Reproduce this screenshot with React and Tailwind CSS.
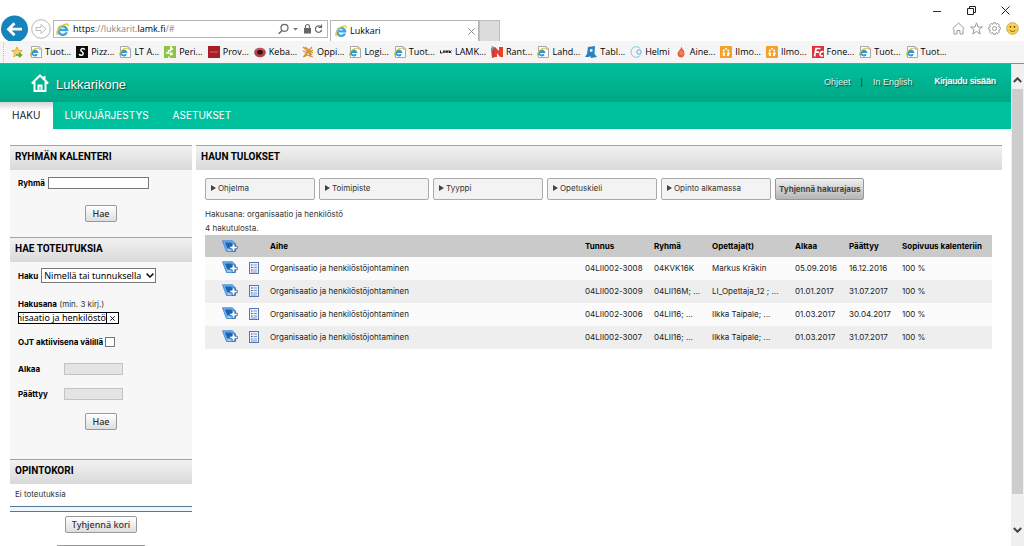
import React from "react";

const chromeFont = "font-['Open_Sans','Noto_Sans',sans-serif]";
const grad = "bg-linear-to-b from-[#f2f2f2] to-[#d9d9d9]";

function IeGlyph({ className }) {
  return (
    <svg viewBox="0 0 16 16" className={className} fill="none" aria-hidden="true">
      <path d="M13.2 11.4A5.3 5.3 0 1 1 13.6 8.6H4.6" stroke="#3fa6dd" strokeWidth="3" />
      <path d="M2.2 14.8C-.6 12.800 2.600 6.400 8 3C12 .6 15.800 .2 14.800 4" stroke="#ecc62a" strokeWidth="1.800" />
    </svg>
  );
}

function IePage() {
  return (
    <svg viewBox="0 0 12 12" className="size-3 shrink-0" fill="none" aria-hidden="true">
      <path d="M1.500 .5H9L11.500 3V11.500H1.500Z" fill="#fff" stroke="#a8a8a0" />
      <path d="M9 .5V3H11.500" stroke="#a8a8a0" />
      <path d="M7 8.300A2.600 2.600 0 1 1 7.300 6.200H2.600" stroke="#2f97d4" strokeWidth="1.800" />
      <path d="M.6 9.500C.2 7.500 2 4.500 4.500 3C6 2 7.500 2 7.600 3" stroke="#e6c52c" strokeWidth="1.100" />
    </svg>
  );
}

function FavIcon({ kind }) {
  if (kind === "ie") return <IePage />;
  return (
    <svg viewBox="0 0 12 12" className="size-3 shrink-0" fill="none" aria-hidden="true">
      {kind === "pizza" && (
        <>
          <rect width="12" height="12" fill="#0c0c0c" />
          <path d="M8.800 3.600C8 2 5 2.200 4.800 4C4.700 5.800 7.600 5.800 7.200 7.800C6.900 9.800 3.800 9.800 3.200 8" stroke="#fff" strokeWidth="1.500" />
        </>
      )}
      {kind === "peri" && (
        <>
          <rect width="12" height="12" fill="#8cc63f" />
          <path d="M7 0V3M7 4.500H4.500V7H2M7 6V9.500M5.500 8H9M5 12V10.500" stroke="#fff" strokeWidth="1.500" />
          <circle cx="7.500" cy="3" r="1.400" fill="#fff" />
        </>
      )}
      {kind === "prov" && (
        <>
          <rect width="12" height="12" fill="#a81e26" />
          <path d="M2 6H10" stroke="#d2666c" strokeWidth="1" />
        </>
      )}
      {kind === "keba" && (
        <>
          <ellipse cx="6" cy="6.500" rx="5.800" ry="4.800" fill="#b5404a" />
          <ellipse cx="6" cy="6.200" rx="2.800" ry="2.400" fill="#3c1014" />
          <path d="M2 4.500C4 2.500 8 2.500 10 4.500" stroke="#d77a80" strokeWidth=".8" />
        </>
      )}
      {kind === "oppi" && (
        <path d="M1 1L10 9M3 1L11 7M10 1L2 10M6 4L3 11M6 5L9 11M1 5L6 7L11 4M1 11L5 9L11 11" stroke="#d79436" strokeWidth="1.300" />
      )}
      {kind === "lamk" && (
        <path d="M.5 4.500V7H2.500M3 7L4 4.500L5 7M6 7V4.500L7 6.500L8 4.500V7M9.500 4.500V7M11.500 4.500L10 6L11.500 7" stroke="#222" strokeWidth="1" />
      )}
      {kind === "rant" && (
        <>
          <path d="M0 2L4 1V11L1 12Z" fill="#b9453c" />
          <path d="M4 1L8 5V1H12V11H9L6 7V11H3Z" fill="#e4402e" />
          <path d="M1.500 0V4" stroke="#69a7c4" strokeWidth="1.500" />
        </>
      )}
      {kind === "tabl" && <path d="M3 1L10 0L9.500 8L12 11L6 12L5 10L4 11L0 11L2 8Z M5 3V6L7.500 5.500V3Z" fill="#2b7fc3" fillRule="evenodd" />}
      {kind === "helmi" && (
        <>
          <path d="M10.300 2.600A5.300 5.300 0 1 0 10.600 9" stroke="#7fc4e6" strokeWidth="1" />
          <circle cx="9" cy="6" r="2.200" stroke="#5aaedb" strokeWidth="1" />
        </>
      )}
      {kind === "aine" && (
        <>
          <path d="M6.500 .5C7 3 9.800 4.500 9.500 8C9.300 10.500 7.500 11.500 6 11.500C4 11.500 2.500 10 2.500 7.800C2.600 5.500 5.500 4 6.500 .5Z" fill="#e8613e" />
          <path d="M4.500 7L7.500 9M5 5.500L8.500 7.500" stroke="#f6b09a" strokeWidth=".8" />
        </>
      )}
      {kind === "ilmo" && (
        <>
          <rect width="12" height="12" rx="1" fill="#f6a02c" />
          <path d="M3.500 10V6.500L2.500 8M3.500 6.500L5 8M8.500 10V6.500L7 8M8.500 6.500L9.800 8M4.500 10V8.500M7.500 10V8.500" stroke="#fff" strokeWidth="1.100" />
          <circle cx="3.800" cy="4.500" r="1" fill="#fff" />
          <circle cx="8.200" cy="4.500" r="1" fill="#fff" />
          <circle cx="6" cy="2.800" r="1" fill="#fff" />
        </>
      )}
      {kind === "fone" && (
        <>
          <rect width="12" height="12" fill="#e0303a" />
          <path d="M2.500 10.500L4 2.500H8.500M3.500 6.200H7M11.500 6C9.500 5 8 6.500 8 8.200C8 10 9.800 10.200 11 9.500" stroke="#fff" strokeWidth="1.700" />
        </>
      )}
    </svg>
  );
}

const favourites = [
  ["ie", "Tuot..."],
  ["pizza", "Pizz..."],
  ["ie", "LT A..."],
  ["peri", "Peri..."],
  ["prov", "Prov..."],
  ["keba", "Keba..."],
  ["oppi", "Oppi..."],
  ["ie", "Logi..."],
  ["ie", "Tuot..."],
  ["lamk", "LAMK..."],
  ["rant", "Rant..."],
  ["ie", "Lahd..."],
  ["tabl", "Tabl..."],
  ["helmi", "Helmi"],
  ["aine", "Aine..."],
  ["ilmo", "Ilmo..."],
  ["ilmo", "Ilmo..."],
  ["fone", "Fone..."],
  ["ie", "Tuot..."],
  ["ie", "Tuot..."],
];

function BrowserChrome() {
  return (
    <div className={`shrink-0 bg-white text-black ${chromeFont}`}>
      <div className="flex h-[19px] items-center justify-end gap-[25px] pr-[14px] pt-px">
        <button aria-label="Minimize">
          <svg viewBox="0 0 9 9" className="size-[9px]"><path d="M0 5.500H8" stroke="#333" /></svg>
        </button>
        <button aria-label="Restore">
          <svg viewBox="0 0 9 9" className="size-[9px]" fill="none" stroke="#222"><path d="M.5 2.500H6.500V8.500H.5ZM2.500 2.500V.5H8.500V6.500H6.500" /></svg>
        </button>
        <button aria-label="Close">
          <svg viewBox="0 0 9 9" className="size-[9px]" stroke="#222"><path d="M.5 .5L8.500 8.500M8.500 .5L.5 8.500" /></svg>
        </button>
      </div>
      <div className="flex h-[22px] items-end pr-[5px]">
        <button aria-label="Back" className="h-[26px] w-[28px] shrink-0">
          <svg viewBox="0 0 28 26" className="h-[26px] w-[28px]" fill="none">
            <circle cx="14.500" cy="14" r="13.500" fill="#1683bd" />
            <path d="M22 14.200H9M14.500 8.200L8.500 14.200L14.500 20.200" stroke="#fff" strokeWidth="2.800" />
          </svg>
        </button>
        <button aria-label="Forward" className="mb-[2px] ml-[3px] shrink-0">
          <svg viewBox="0 0 20 20" className="size-5" fill="none" stroke="#b4b4b4">
            <circle cx="10" cy="10" r="9.300" />
            <path d="M5 8.500H10V5.500L15 10L10 14.500V11.500H5Z" strokeWidth=".9" />
          </svg>
        </button>
        <div className="mb-[3px] ml-[2px] flex h-[18px] w-[275px] items-center border border-[#b5b5b5] pl-[2px] pr-[3px]">
          <IeGlyph className="size-[13px] shrink-0" />
          <div className="ml-1 flex-1 text-[9px] leading-4 text-[#888]">
            <span className="text-black">https</span>://lukkarit.<span className="text-black">lamk.fi</span>/#
          </div>
          <svg viewBox="0 0 46 12" className="h-3 w-[46px]" fill="none" stroke="#666">
            <circle cx="6.500" cy="4.800" r="3.500" strokeWidth="1.200" />
            <path d="M4 7.500L.8 10.700" strokeWidth="1.500" />
            <path d="M15 5H20L17.500 7.500Z" fill="#777" stroke="none" />
            <rect x="26" y="5" width="7" height="5.500" fill="#666" stroke="none" />
            <path d="M27.500 5V3.500A2 2 0 0 1 31.500 3.500V5" strokeWidth="1.200" />
            <path d="M43 4A3.200 3.200 0 1 0 43.700 7M43.500 1.500V4.500H40.500" strokeWidth="1.200" />
          </svg>
        </div>
        <div className="ml-[2px] flex h-[21px] w-[149px] items-center border border-b-0 border-[#b5b5b5] pl-1 pr-[3px]">
          <IeGlyph className="size-3 shrink-0" />
          <span className="ml-[3px] flex-1 text-[9px] leading-4">Lukkari</span>
          <button aria-label="Close tab">
            <svg viewBox="0 0 7 7" className="size-[7px]" stroke="#888"><path d="M.5 .5L6.500 6.500M6.500 .5L.5 6.500" /></svg>
          </button>
        </div>
        <button aria-label="New tab" className="h-[21px] w-[21px] border border-b-0 border-[#bdbdbd] bg-[#dcdcdc]" />
        <div className="mb-[6px] ml-auto flex items-center gap-[5px]">
          <svg viewBox="0 0 13 13" className="size-[13px]" fill="none" stroke="#999"><path d="M.8 6.500L6.500 1L12.200 6.500L11 7.500V12H8V8.500H5V12H2V7.500Z" /></svg>
          <svg viewBox="0 0 13 13" className="size-[13px]" fill="none" stroke="#999"><path d="M6.500 .8L8 5H12.400L8.900 7.700L10.200 12L6.500 9.500L2.800 12L4.100 7.700L.6 5H5Z" /></svg>
          <svg viewBox="0 0 13 13" className="size-[13px]" fill="none" stroke="#999">
            <path d="M5.500 .7H7.500L8 2.300L9.700 1.400L11.300 3L10.600 4.900L12.300 5.500V7.500L10.600 8.100L11.400 10L9.900 11.500L8 10.700L7.500 12.300H5.500L5 10.700L3.100 11.500L1.600 10L2.400 8.100L.7 7.500V5.500L2.400 4.900L1.600 3L3.100 1.500L5 2.300Z" />
            <circle cx="6.500" cy="6.500" r="2" />
          </svg>
          <svg viewBox="0 0 13 13" className="size-[13px]" fill="none">
            <circle cx="6.500" cy="6.500" r="5.800" fill="#fbd34a" stroke="#c9a85a" />
            <circle cx="4.500" cy="4.800" r=".9" fill="#5a4310" />
            <circle cx="8.500" cy="4.800" r=".9" fill="#5a4310" />
            <path d="M3.500 7.800C5 10 8 10 9.500 7.800" stroke="#7a5b18" />
          </svg>
        </div>
      </div>
      <div className="flex h-[23px] items-center overflow-hidden border-b border-[#8c8c8c] bg-[#f5f5f5] pl-[3px]">
        <div className="h-[19px] border-l border-dotted border-[#bbb]" />
        <button aria-label="Add to favorites bar" className="ml-[7px] mr-[7px]">
          <svg viewBox="0 0 12 12" className="size-3" fill="none">
            <path d="M6 .8L7.500 4.300L11.300 4.600L8.400 7.100L9.200 11L6 8.800L2.700 11L3.500 7.100L.7 4.600L4.500 4.300Z" fill="#fbd15a" stroke="#e0a030" strokeWidth=".8" />
            <path d="M5 9H10M8 6.800L10.500 9L8 11.200" stroke="#4caf3c" strokeWidth="1.500" />
          </svg>
        </button>
        <nav className="flex gap-[5px]">
          {favourites.map(([kind, label], i) => (
            <a key={i} href="#" className="flex items-center gap-[3px] whitespace-nowrap text-[9px] leading-4">
              <FavIcon kind={kind} />
              {label}
            </a>
          ))}
        </nav>
      </div>
    </div>
  );
}

function PanelTitle({ children }) {
  return (
    <h2 className={`h-[25px] border-t border-[#a3a3a3] pl-[5px] font-['Roboto',sans-serif] text-[10px] leading-[22px] font-bold text-black ${grad}`}>
      {children}
    </h2>
  );
}

const pushButton =
  "block h-[17px] rounded-[2px] border border-[#999] bg-linear-to-b from-white to-[#dedede] px-[6px] font-['Noto_Sans',sans-serif] text-[9px] leading-[15px] font-medium text-[#333]";

function Sidebar() {
  return (
    <aside className="w-[182px] shrink-0">
      <PanelTitle>RYHMÄN KALENTERI</PanelTitle>
      <form className="h-[67px] bg-[#f7f7f7] px-2 pt-[7px]">
        <div className="flex items-center gap-[3px]">
          <label htmlFor="group" className="text-[8px] font-bold text-black">Ryhmä</label>
          <input id="group" className="h-3 w-[101px] border border-[#777] bg-white px-[2px] text-[8px]" />
        </div>
        <div className="mt-4 flex justify-center">
          <button type="button" className={pushButton}>Hae</button>
        </div>
      </form>

      <PanelTitle>HAE TOTEUTUKSIA</PanelTitle>
      <form className="h-[197px] bg-[#f7f7f7] px-2 pt-[6px]">
        <div className="flex items-center gap-[3px]">
          <label htmlFor="search-by" className="text-[8px] font-bold text-black">Haku</label>
          <span className="relative">
            <select
              id="search-by"
              className="block h-[15px] w-[115px] appearance-none border border-[#777] bg-white pl-[2px] font-['Noto_Sans',sans-serif] text-[9px] leading-[13px] text-black"
            >
              <option>Nimellä tai tunnuksella</option>
            </select>
            <svg viewBox="0 0 8 5" className="pointer-events-none absolute right-[2px] top-[5px] h-[5px] w-2" fill="none" stroke="#111" strokeWidth="1.500">
              <path d="M.6 .6L4 4L7.400 .6" />
            </svg>
          </span>
        </div>
        <label htmlFor="term" className="mt-[15px] block text-[8px] leading-[12px] text-[#333]">
          <b className="text-black">Hakusana</b> (min. 3 kirj.)
        </label>
        <div className="mt-[2px] flex h-3 w-[101px] border border-black bg-white">
          <div className="flex min-w-0 flex-1 justify-end overflow-hidden">
            <input
              id="term"
              defaultValue="organisaatio ja henkilöstö"
              className="w-[112px] shrink-0 bg-transparent text-right font-['Noto_Sans',sans-serif] text-[9px] leading-[10px] text-black outline-none"
            />
          </div>
          <button type="button" aria-label="Clear" className="flex w-3 items-center justify-center border-l border-black">
            <svg viewBox="0 0 5 5" className="size-[5px]" stroke="#111"><path d="M.3 .3L4.700 4.700M4.700 .3L.3 4.700" /></svg>
          </button>
        </div>
        <div className="mt-3 flex items-center gap-[2px]">
          <label htmlFor="active" className="text-[8px] leading-3 font-bold text-black">OJT aktiivisena välillä</label>
          <input id="active" type="checkbox" className="size-[10px] appearance-none border border-[#777] bg-white" />
        </div>
        <div className="mt-[15px] flex items-center">
          <label htmlFor="from" className="w-[46px] text-[8px] leading-3 font-bold text-black">Alkaa</label>
          <input id="from" disabled className="h-3 w-[59px] border border-[#c3c3c3] bg-[#e4e4e4]" />
        </div>
        <div className="mt-[13px] flex items-center">
          <label htmlFor="to" className="w-[46px] text-[8px] leading-3 font-bold text-black">Päättyy</label>
          <input id="to" disabled className="h-3 w-[59px] border border-[#c3c3c3] bg-[#e4e4e4]" />
        </div>
        <div className="mt-[13px] flex justify-center">
          <button type="button" className={pushButton}>Hae</button>
        </div>
      </form>

      <PanelTitle>OPINTOKORI</PanelTitle>
      <p className="h-[22px] pl-[5px] text-[8px] leading-[21px] text-[#333]">Ei toteutuksia</p>
      <div className="h-[6px] border-y border-[#55779a] bg-[#f0f7fb]" />
      <div className="mt-1 flex flex-col items-center gap-3">
        <button type="button" className={pushButton}>Tyhjennä kori</button>
        <button type="button" aria-label="Lukujärjestys" className={`w-[90px] ${pushButton}`} />
      </div>
    </aside>
  );
}

function AddIcon() {
  return (
    <svg viewBox="0 0 16 13" className="block h-[13px] w-4" fill="none" aria-hidden="true">
      <path d="M.5 .8H10.500L13.500 4V11.500H4.500Z" fill="#6db0ee" stroke="#3d8ad6" strokeWidth=".9" />
      <path d="M3 2.500H9.500L11 8.200H5.200Z" fill="#1c62b4" />
      <path d="M5.500 10H11" stroke="#cfe6fa" />
      <path d="M10.200 3.800H12.800V6.200H15.300V8.800H12.800V11.300H10.200V8.800H7.800V6.200H10.200Z" fill="#fff" stroke="#1d5ea8" strokeWidth=".8" />
    </svg>
  );
}

function ListIcon() {
  return (
    <svg viewBox="0 0 10 12" className="block h-3 w-[10px]" fill="none" aria-hidden="true">
      <rect x=".5" y=".5" width="9" height="11" fill="#eef3fb" stroke="#5578b4" />
      <path d="M2 3H3.500M2 5.500H3.500M2 8H3.500" stroke="#2a4d8f" />
      <path d="M4.500 3H8M4.500 5.500H8M4.500 8H8M2 10H8" stroke="#7c9ac9" />
    </svg>
  );
}

const filters = ["Ohjelma", "Toimipiste", "Tyyppi", "Opetuskieli", "Opinto alkamassa"];

const results = [
  ["04LII002-3008", "04KVK16K", "Markus Kräkin", "05.09.2016", "16.12.2016"],
  ["04LII002-3009", "04LII16M; ...", "LI_Opettaja_12 ; ...", "01.01.2017", "31.07.2017"],
  ["04LII002-3006", "04LII16; ...", "Ilkka Taipale; ...", "01.03.2017", "30.04.2017"],
  ["04LII002-3007", "04LII16; ...", "Ilkka Taipale; ...", "01.03.2017", "31.07.2017"],
];

function Results() {
  return (
    <section className="min-w-0 flex-1">
      <PanelTitle>HAUN TULOKSET</PanelTitle>
      <div className="pl-[9px] pr-[10px] pt-2">
        <div className="flex gap-1">
          {filters.map((f) => (
            <button key={f} className="flex h-[22px] w-[110px] items-start rounded-[2px] border border-[#aaa] bg-[#f3f3f3] pl-[5px] pt-[3px] text-[8px] leading-3 text-[#333]">
              <svg viewBox="0 0 5 6" className="mr-[2px] mt-[3px] h-[6px] w-[5px]"><path d="M0 0L5 3L0 6Z" fill="#444" /></svg>
              {f}
            </button>
          ))}
          <button className="h-[22px] whitespace-nowrap rounded-[2px] border border-[#999] bg-linear-to-b from-[#f0f0f0] to-[#b5b5b5] px-[3px] text-[8px] font-bold text-[#444]">
            Tyhjennä hakurajaus
          </button>
        </div>
        <p className="mt-[7px] text-[8px] leading-[14px] text-[#333]">Hakusana: organisaatio ja henkilöstö</p>
        <p className="text-[8px] leading-[14px] text-[#333]">4 hakutulosta.</p>
        <table className="w-full table-fixed text-left text-[8px] text-[#222]">
          <colgroup>
            <col className="w-[43px]" />
            <col className="w-[22px]" />
            <col />
            <col className="w-[69px]" />
            <col className="w-[58px]" />
            <col className="w-[83px]" />
            <col className="w-[54px]" />
            <col className="w-[53px]" />
            <col className="w-[90px]" />
          </colgroup>
          <thead>
            <tr className="h-[22px] bg-[#cacaca] text-black">
              <th className="pl-[17px]"><AddIcon /></th>
              <th />
              <th>Aihe</th>
              <th>Tunnus</th>
              <th>Ryhmä</th>
              <th>Opettaja(t)</th>
              <th>Alkaa</th>
              <th>Päättyy</th>
              <th className="whitespace-nowrap">Sopivuus kalenteriin</th>
            </tr>
          </thead>
          <tbody>
            {results.map((r) => (
              <tr key={r[0]} className="h-[23px] whitespace-nowrap odd:bg-[#fbfbfb] even:bg-[#eeeeee] *:pb-[2px]">
                <td className="pl-[17px]"><button aria-label="Lisää" className="block"><AddIcon /></button></td>
                <td className="pl-px"><button aria-label="Tiedot" className="block"><ListIcon /></button></td>
                <td>Organisaatio ja henkilöstöjohtaminen</td>
                {r.map((c, i) => <td key={i}>{c}</td>)}
                <td>100 %</td>
              </tr>
            ))}
          </tbody>
        </table>
      </div>
    </section>
  );
}

export default function App() {
  return (
    <div className="flex h-screen flex-col overflow-hidden bg-white font-['Inter',sans-serif]">
      <BrowserChrome />
      <div className="flex min-h-0 flex-1">
        <div className="min-w-0 flex-1 overflow-hidden">
          <header className="flex h-[38px] items-center bg-linear-to-b from-[#00bf9b] to-[#00a786] pl-[31px] pr-[15px] font-['Liberation_Sans',sans-serif] text-white [text-shadow:1px_1px_1px_#00000099]">
            <svg viewBox="0 0 18 18" className="size-[18px]" fill="none" stroke="#fff" strokeWidth="2" aria-hidden="true">
              <path d="M.8 9.500L9 1.500L17.200 9.500M13.500 2V5M3.500 8V17H14.500V8M7.500 17V11.500H10.500V17" />
            </svg>
            <a href="#" className="ml-[7px] mt-[3px] text-[13px]">Lukkarikone</a>
            <div className="ml-auto flex items-center text-[9px]">
              <a href="#" className="text-[#e0f5f0]">Ohjeet</a>
              <span className="mx-[10px] text-[#003f33] [text-shadow:none]">|</span>
              <a href="#" className="text-[#e0f5f0]">In English</a>
              <a href="#" className="mb-[3px] ml-[22px] [text-shadow:0_0_1px_#ffffff,1px_1px_1px_#000000aa]">Kirjaudu sisään</a>
            </div>
          </header>
          <nav className="flex h-[27px] bg-[#00c19e] text-[10px] leading-[27px] text-white">
            <a href="#" className="bg-linear-to-b from-[#d5d5d5] to-white to-30% px-3 text-[#222]">HAKU</a>
            <a href="#" className="px-3">LUKUJÄRJESTYS</a>
            <a href="#" className="px-3">ASETUKSET</a>
          </nav>
          <main className="flex gap-1 pl-[10px] pr-[9px] pt-4">
            <Sidebar />
            <Results />
          </main>
        </div>
        <div className="flex w-[13px] shrink-0 flex-col bg-[#f0f0f0]">
          <button aria-label="Scroll up" className="flex h-[25px] items-center justify-center pt-[6px]">
            <svg viewBox="0 0 9 6" className="h-[6px] w-[9px]" fill="none" stroke="#444" strokeWidth="2"><path d="M.8 5L4.500 1.300L8.200 5" /></svg>
          </button>
          <div className="mx-px flex-1 bg-[#cdcdcd]" />
          <button aria-label="Scroll down" className="flex h-[52px] items-center justify-center pt-[20px]">
            <svg viewBox="0 0 9 6" className="h-[6px] w-[9px]" fill="none" stroke="#444" strokeWidth="2"><path d="M.8 1L4.500 4.700L8.200 1" /></svg>
          </button>
        </div>
      </div>
    </div>
  );
}
